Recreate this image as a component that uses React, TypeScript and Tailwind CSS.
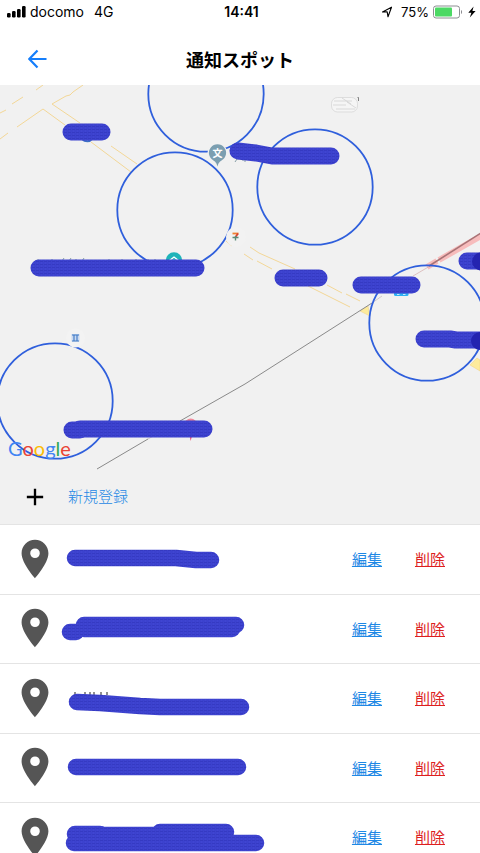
import { MdAdd, MdLocationOn } from "react-icons/md";

const spots = [
  { id: 1, strokes: ["M15 32H116L136 34H151"] },
  { id: 2, strokes: ["M10 37H16", "M24 30H176", "M24 34H172"] },
  { id: 3, strokes: ["M17 37L40 38L80 41L100 42H181"], ticks: true },
  { id: 4, strokes: ["M16 33H178"] },
  { id: 5, strokes: ["M14 39H196", "M15 30H40", "M40 31H100", "M100 28H166"] },
];

const circles = [
  [206, 94],
  [175, 210],
  [315, 187],
  [427, 323],
  [55, 401],
];

const roads = [
  "M43 85L36 90M23 97L12 104M6 110L0 113",
  "M83 85L73 92L70 95L66 96L52 104L80 123",
  "M0 139L8 133M17 127L43 109L65 125",
  "M91 142L131 172M111 146L137 164",
  "M226 241L232 246M250 247L259 253L295 269M244 254L253 260M257 261L272 269",
  "M327 285L342 293M346 294L360 301M308 286L350 307",
];

const labels = [
  "M71 132H102",
  "M39 268H196",
  "M238 151L256 153L272 156H331",
  "M283 278H319",
  "M361 285H412",
  "M467 261H490",
  "M424 339H450L456 340H490",
  "M72 430H80",
  "M80 429H204",
];

function MarkerPattern({ id }: { id: string }) {
  return (
    <pattern id={id} width="4" height="3" patternUnits="userSpaceOnUse">
      <rect width="4" height="3" fill="#3c42ce" />
      <path d="M0 0.5H3" stroke="#3438c0" strokeWidth="0.8" />
      <path d="M1 2H2" stroke="#484edb" strokeWidth="0.6" />
    </pattern>
  );
}

function StatusBar() {
  return (
    <div className="grid h-6 grid-cols-3 items-center pr-1 pl-[7px] text-[13px] leading-6 text-black">
      <div className="flex items-center">
        <svg width="19" height="12" viewBox="0 0 19 12" className="mr-1">
          <rect x="0" y="7" width="3.6" height="4.5" rx="1.2" />
          <rect x="5" y="5" width="3.6" height="6.5" rx="1.2" />
          <rect x="10" y="3" width="3.6" height="8.5" rx="1.2" />
          <rect x="15" y="0" width="3.6" height="11.5" rx="1.2" />
        </svg>
        <span className="text-sm leading-6">docomo</span>
        <span className="ml-2.5 text-sm leading-6">4G</span>
      </div>
      <div className="text-center text-sm leading-6 font-semibold">14:41</div>
      <div className="flex items-center justify-end">
        <svg width="12" height="12" viewBox="0 0 12 12" className="mr-2">
          <path
            d="M1.5 6L10.5 1.2L7 10.800L6.2 5.800Z"
            fill="none"
            stroke="#000"
            strokeWidth="1.1"
            strokeLinejoin="round"
          />
        </svg>
        <span>75%</span>
        <svg width="31" height="14" viewBox="0 0 31 14" className="ml-1">
          <rect x="0.5" y="1" width="26" height="12" rx="2.5" fill="#fff" stroke="#8e8e93" />
          <rect x="2" y="2.5" width="17" height="9" rx="1" fill="#4cd964" />
          <path d="M28 5V9C29.4 8.6 29.4 5.4 28 5Z" fill="#8e8e93" />
        </svg>
        <svg width="8" height="12" viewBox="0 0 8 12" className="ml-1">
          <path d="M5.6 0.5L0.3 6.7H3.4L1.8 11.5L7.6 4.9H4.4Z" />
        </svg>
      </div>
    </div>
  );
}

function Header() {
  return (
    <header className="grid h-[61px] grid-cols-[1fr_auto_1fr] items-center pt-3">
      <button type="button" aria-label="戻る" className="mb-1 ml-7 w-5 text-[#157efb]">
        <svg width="20" height="20" viewBox="0 0 20 20" fill="none" stroke="currentColor" strokeWidth="2.2">
          <path d="M9.5 1.5L1.3 10L9.5 18.5M1.3 10H18.5" />
        </svg>
      </button>
      <h1 className="text-lg font-bold text-black">通知スポット</h1>
    </header>
  );
}

function SpotMap() {
  return (
    <div className="relative h-[385px] overflow-hidden">
      <svg viewBox="0 85 480 385" preserveAspectRatio="xMidYMid slice" className="size-full" fill="none">
        <defs>
          <MarkerPattern id="map-marker" />
        </defs>

        {/* roads */}
        {roads.map((d) => (
          <path key={d} d={d} stroke="#f3d48c" strokeWidth="0.9" />
        ))}
        <path
          d="M360 311L368 306L370 316ZM470 365L477 358L480 360V371Z"
          fill="#fdeb9c"
          stroke="#f0d083"
          strokeWidth="0.5"
        />

        {/* railway */}
        <path d="M427 267L437 261M439 260L481 236" stroke="#f7bcbc" strokeWidth="6" />
        <path d="M413 276L430 266" stroke="#d8b4b4" strokeWidth="0.8" />
        <path d="M429 266L481 233" stroke="#a87376" strokeWidth="1.6" />
        <path d="M97 469L148 439M180 421L245 384L372 303" stroke="#8a8a8a" strokeWidth="1" />
        <path d="M148 439L180 421M372 303L382 296" stroke="#c4b8b8" strokeWidth="0.7" />

        {circles.map(([cx, cy]) => (
          <circle key={`${cx}-${cy}`} cx={cx} cy={cy} r="57.7" stroke="#2f5fdc" strokeWidth="1.8" />
        ))}

        {/* school */}
        <path d="M217.5 168L212 162A10 10 0 1 1 223 162Z" fill="#f1f1f1" />
        <path
          d="M217.5 166.5C216.5 162.5 215 161.5 213.5 160.5A8.6 8.6 0 1 1 221.5 160.5C220 161.5 218.5 162.5 217.5 166.5Z"
          fill="#7b9eb0"
        />
        <text x="217.5" y="157" fontSize="10" fontWeight="700" fill="#fff" textAnchor="middle">
          文
        </text>

        {/* house */}
        <circle cx="174" cy="260.5" r="8.3" fill="#1fb4b9" />
        <path d="M169.5 260.500L174 257L178.5 260.500M171.5 260.500H176.5" stroke="#fff" strokeWidth="1.3" />

        {/* store */}
        <circle cx="236" cy="237" r="10" fill="#f2f2f2" />
        <path d="M232.5 233.5H238.5" stroke="#f08030" strokeWidth="1.8" />
        <path d="M238 233.5L235.5 237" stroke="#d9402e" strokeWidth="1.8" />
        <path d="M235.5 236V240.5M232.5 237.5H238.5" stroke="#5d8b78" strokeWidth="1.4" />

        {/* bank */}
        <circle cx="75.5" cy="338" r="9.5" fill="#f3f3f3" />
        <rect x="71.5" y="334" width="8" height="7.5" fill="#c9daf2" />
        <path d="M72 335H79M72 341H79M74 335V341M77 335V341" stroke="#3f78c4" strokeWidth="1.1" />

        {/* bus stop */}
        <rect x="394" y="288" width="14.5" height="8" rx="1.5" fill="#2cb0f3" />
        <path d="M397 294.5H399.5M403 294.5H405.5" stroke="#bfe8fd" strokeWidth="1.2" />

        {/* hidden pin */}
        <path d="M190.7 441L189.5 436H192Z" fill="#f0587a" />
        <circle cx="190.7" cy="425" r="6.5" fill="#f28a9c" />

        {/* erased label */}
        <rect x="331.5" y="97.5" width="26" height="14.5" rx="6" fill="#f5f5f5" stroke="#d2d2d2" strokeWidth="0.7" />
        <path
          d="M334 101H352M333 105H346M336 109H355M347 102L356 108M342 98L351 104"
          stroke="#d2d2d2"
          strokeWidth="0.8"
        />
        <path d="M357.5 97.5H358.5V101" stroke="#666" strokeWidth="0.8" />

        {/* label edges */}
        <path
          d="M38 259V261M52 259V261M62 261L64 258M69 261L71 258M76 259V261M82 261L84 258M109 259V261M122 259V261M136 259V261M148 259V261M155 259V261M235 162L237 159M243 159V161M245 159V162"
          stroke="#6d8a94"
          strokeWidth="0.8"
        />
        <path d="M82 139C85 142 90 142 92 139" stroke="#3d6fc4" strokeWidth="2" />

        <g stroke="url(#map-marker)" strokeWidth="17" strokeLinecap="round" strokeLinejoin="round">
          {labels.map((d) => (
            <path key={d} d={`${d}v0.01`} />
          ))}
        </g>
        <path d="M481 261.5h6M480 341h6" stroke="#2424b0" strokeWidth="18" strokeLinecap="round" />
      </svg>
      <div aria-label="Google" className="absolute bottom-[10px] left-2 font-['Lato'] text-xl leading-6">
        <span className="text-[#4285f4]">G</span>
        <span className="text-[#ea4335]">o</span>
        <span className="text-[#fbbc05]">o</span>
        <span className="text-[#4285f4]">g</span>
        <span className="text-[#34a853]">l</span>
        <span className="text-[#ea4335]">e</span>
      </div>
    </div>
  );
}

function SpotRow({ spot }: { spot: (typeof spots)[number] }) {
  const patternId = `marker-${spot.id}`;

  return (
    <li className="flex items-center border-t border-[#e4e4e4] pr-[35px] pb-0.5 pl-3 odd:h-[70px] even:h-[69px]">
      <MdLocationOn size={46} className="shrink-0 text-[#555]" />
      <div className="flex-1 pl-0.5">
        <svg width="210" height="66" viewBox="0 0 210 66" fill="none">
          <defs>
            <MarkerPattern id={patternId} />
          </defs>
          {spot.ticks && (
            <path d="M15 27V30M25 27V30M30 27V30M34 27V30M41 27V30M47 27V30" stroke="#222" strokeWidth="1" />
          )}
          {spot.strokes.map((d) => (
            <path
              key={d}
              d={`${d}v0.01`}
              stroke={`url(#${patternId})`}
              strokeWidth="16.5"
              strokeLinecap="round"
              strokeLinejoin="round"
            />
          ))}
        </svg>
      </div>
      <div className="mt-1 flex gap-[33px] text-[15px] underline">
        <a href="#edit" className="text-[#1e88e5] underline">
          編集
        </a>
        <a href="#delete" className="text-[#dd1f1f] underline">
          削除
        </a>
      </div>
    </li>
  );
}

export default function App() {
  return (
    <div className="flex h-screen flex-col overflow-hidden bg-white font-['Inter','Noto_Sans_CJK_JP',sans-serif]">
      <StatusBar />
      <Header />
      <main className="min-h-0 flex-1 bg-[#f1f1f1]">
        <SpotMap />
        <button type="button" className="flex h-[54px] w-full items-center pl-[21px]">
          <MdAdd size={28} className="text-black" />
          <span className="ml-[19px] text-[15px] font-light text-[#1e88e5]">新規登録</span>
        </button>
        <ul className="bg-white">
          {spots.map((spot) => (
            <SpotRow key={spot.id} spot={spot} />
          ))}
        </ul>
      </main>
    </div>
  );
}
